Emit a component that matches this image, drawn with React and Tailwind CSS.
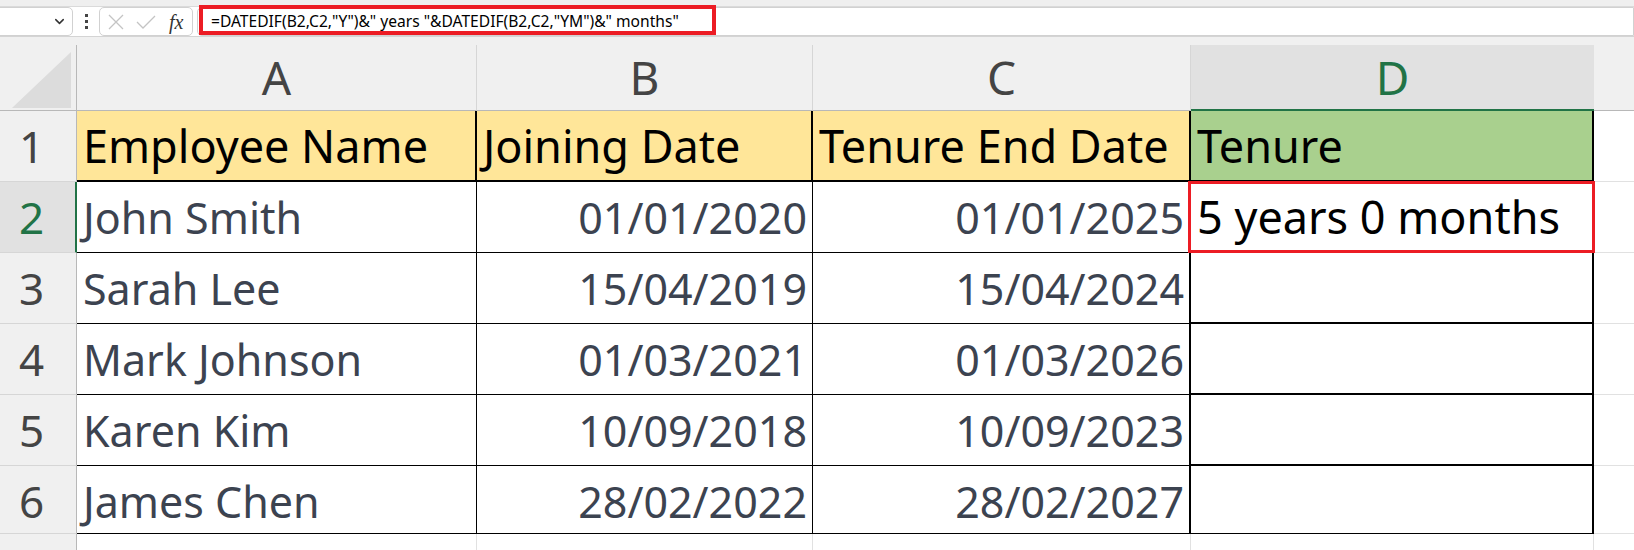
import React from "react";
import { ChevronDown } from "lucide-react";

const rows = [
  { name: "John Smith", start: "01/01/2020", end: "01/01/2025", tenure: "5 years 0 months" },
  { name: "Sarah Lee", start: "15/04/2019", end: "15/04/2024", tenure: "" },
  { name: "Mark Johnson", start: "01/03/2021", end: "01/03/2026", tenure: "" },
  { name: "Karen Kim", start: "10/09/2018", end: "10/09/2023", tenure: "" },
  { name: "James Chen", start: "28/02/2022", end: "28/02/2027", tenure: "" },
];

const cols = ["A", "B", "C", "D"];

const Toolbar = () => {
  return (
    <div className="relative h-[37px] bg-white border-b border-[#d4d4d4]">
      <div className="h-[7px] bg-[#efefef] border-b border-[#dadada]" />
      <div className="flex items-start h-[29px]">
        {/* name box, left side runs off screen */}
        <div className="ml-[-12px] w-[85px] h-[29px] bg-white border border-[#d1d1d1] rounded-[5px] flex items-center justify-end pr-[5px]">
          <ChevronDown size={15} strokeWidth={2.4} color="#333" />
        </div>
        <div className="w-[26px] h-[29px] flex flex-col items-center justify-center gap-[3px]">
          <span className="w-[3px] h-[3px] bg-[#444]" />
          <span className="w-[3px] h-[3px] bg-[#444]" />
          <span className="w-[3px] h-[3px] bg-[#444]" />
        </div>
        <div className="w-[94px] h-[29px] border border-[#d1d1d1] rounded-[5px] flex items-center pl-[8px] gap-[12px]">
          <svg width="16" height="16" viewBox="0 0 16 16">
            <path d="M1 1 L15 15 M15 1 L1 15" stroke="#c4c4c4" strokeWidth="1.3" fill="none" />
          </svg>
          <svg width="20" height="14" viewBox="0 0 20 14">
            <path d="M1 7 L7 13 L19 1" stroke="#c4c4c4" strokeWidth="1.3" fill="none" />
          </svg>
          <span className="text-[20px] leading-none italic text-[#333] font-['Liberation_Serif',serif] ml-[1px]">
            fx
          </span>
        </div>
        <div className="ml-[4px] flex-1 h-[29px] bg-white border border-[#d1d1d1] rounded-l-[5px] flex items-center pl-[13px]">
          <span className="text-[15.6px] leading-none text-black font-['Noto_Sans',sans-serif] whitespace-nowrap">
            =DATEDIF(B2,C2,"Y")&amp;" years "&amp;DATEDIF(B2,C2,"YM")&amp;" months"
          </span>
        </div>
      </div>
      <div className="absolute left-[199px] top-[5px] w-[517px] h-[30px] border-[4px] border-[#ec1c24]" />
    </div>
  );
};

const App = () => {
  return (
    <div className="relative w-[1634px] h-[550px] overflow-hidden bg-white font-['Noto_Sans',sans-serif]">
      <Toolbar />
      <div className="h-[8px] bg-[#f0f0f0]" />

      <div className="grid grid-cols-[77px_400px_336px_378px_403px_40px] grid-rows-[66px_71px_71px_71px_71px_71px_68px_16px]">
        {/* column header row */}
        <div className="bg-[#f0f0f0] border-r border-b border-[#b8b8b8] flex items-end justify-end">
          <svg width="62" height="60" viewBox="0 0 62 60" className="mb-[2px] mr-[2px]">
            <polygon points="0,60 59,60 59,4" fill="#dcdcdc" />
          </svg>
        </div>
        {cols.map((c) =>
          c === "D" ? (
            <div
              key={c}
              className="bg-[#e1e1e1] border-b-2 border-[#217346] text-center pt-[9px] text-[46px] leading-[46px] text-[#217346]"
            >
              {c}
            </div>
          ) : (
            <div
              key={c}
              className="bg-[#f0f0f0] border-r border-r-[#d6d6d6] border-b border-b-[#b8b8b8] text-center pt-[9px] text-[46px] leading-[46px] text-[#444]"
            >
              {c}
            </div>
          )
        )}
        <div className="bg-[#f0f0f0] border-b border-[#b8b8b8]" />

        {/* row 1 */}
        <div className="bg-[#f0f0f0] border-r border-r-[#b8b8b8] border-b border-b-[#d6d6d6] pr-[13px] text-center pt-[13px] text-[44px] leading-[44px] text-[#444]">
          1
        </div>
        <div className="bg-[#ffe699] border-r-2 border-b-2 border-black pl-[6px] pt-[12px] text-[45px] leading-[45px] text-black whitespace-nowrap">
          Employee Name
        </div>
        <div className="bg-[#ffe699] border-r-2 border-b-2 border-black pl-[6px] pt-[12px] text-[45px] leading-[45px] text-black whitespace-nowrap">
          Joining Date
        </div>
        <div className="bg-[#ffe699] border-r-2 border-b-2 border-black pl-[6px] pt-[12px] text-[45px] leading-[45px] text-black whitespace-nowrap">
          Tenure End Date
        </div>
        <div className="bg-[#a9d08e] border-r-2 border-b-2 border-black pl-[6px] pt-[12px] text-[45px] leading-[45px] text-black whitespace-nowrap">
          Tenure
        </div>
        <div className="border-b border-[#e1e1e1]" />

        {/* data rows */}
        {rows.map((r, i) => (
          <React.Fragment key={r.name}>
            <div
              className={
                i === 0
                  ? "bg-[#e1e1e1] border-r-2 border-r-[#217346] border-b border-b-[#d6d6d6] pr-[12px] text-center pt-[13px] text-[44px] leading-[44px] text-[#217346]"
                  : "bg-[#f0f0f0] border-r border-r-[#b8b8b8] border-b border-b-[#d6d6d6] pr-[13px] text-center pt-[13px] text-[44px] leading-[44px] text-[#444]"
              }
            >
              {i + 2}
            </div>
            <div className="border-r border-b border-black pl-[6px] pt-[14px] text-[43px] leading-[43px] text-[#3c4350] whitespace-nowrap">
              {r.name}
            </div>
            <div className="border-r border-b border-black pr-[5px] text-right pt-[14px] text-[43px] leading-[43px] text-[#3c4350]">
              {r.start}
            </div>
            <div className="border-r-2 border-b border-black pr-[5px] text-right pt-[14px] text-[43px] leading-[43px] text-[#3c4350]">
              {r.end}
            </div>
            <div
              className={
                i === rows.length - 1
                  ? "border-r-2 border-b border-black pl-[6px] pt-[12px] text-[45px] leading-[45px] text-black whitespace-nowrap"
                  : "border-r-2 border-b-2 border-black pl-[6px] pt-[12px] text-[45px] leading-[45px] text-black whitespace-nowrap"
              }
            >
              {r.tenure}
            </div>
            <div className="border-b border-[#e1e1e1]" />
          </React.Fragment>
        ))}

        {/* partial row 7 */}
        <div className="bg-[#f0f0f0] border-r border-[#b8b8b8]" />
        <div className="border-r border-[#e1e1e1]" />
        <div className="border-r border-[#e1e1e1]" />
        <div className="border-r border-[#e1e1e1]" />
        <div className="border-r border-[#e1e1e1]" />
        <div />
      </div>

      {/* highlight round D2 */}
      <div className="absolute left-[1188px] top-[181px] w-[407px] h-[72px] border-[3px] border-[#ec1c24]" />
    </div>
  );
};

export default App;
